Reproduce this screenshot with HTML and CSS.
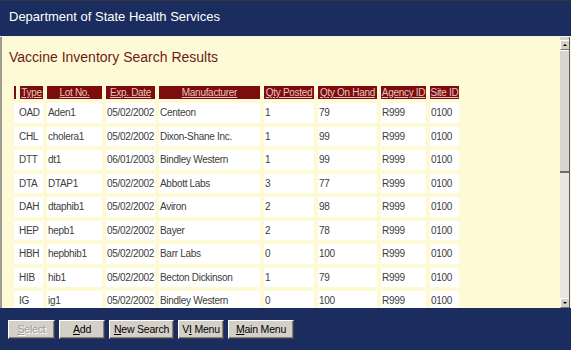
FILE: index.html
```html
<!DOCTYPE html>
<html lang="en">

<head>
    <meta charset="UTF-8">
    <title>Vaccine Inventory Search Results</title>
    <link rel="stylesheet" href="styles.css">
</head>

<body>
    <div class="topbar">Department of State Health Services</div>

    <div class="main">
        <div class="content">
            <h1>Vaccine Inventory Search Results</h1>
            <table class="results">
                <thead>
                    <tr>
                        <th class="c-mark"></th>
                        <th class="c-type"><a href="#">Type</a></th>
                        <th class="c-lot"><a href="#">Lot No.</a></th>
                        <th class="c-date"><a href="#">Exp. Date</a></th>
                        <th class="c-man"><a href="#">Manufacturer</a></th>
                        <th class="c-qp"><a href="#">Qty Posted</a></th>
                        <th class="c-qh"><a href="#">Qty On Hand</a></th>
                        <th class="c-ag"><a href="#">Agency ID</a></th>
                        <th class="c-site"><a href="#">Site ID</a></th>
                    </tr>
                </thead>
                <tbody>
                    <tr><td colspan="2" class="type">OAD</td><td>Aden1</td><td>05/02/2002</td><td>Centeon</td><td>1</td><td>79</td><td>R999</td><td>0100</td></tr>
                    <tr><td colspan="2" class="type">CHL</td><td>cholera1</td><td>05/02/2002</td><td>Dixon-Shane Inc.</td><td>1</td><td>99</td><td>R999</td><td>0100</td></tr>
                    <tr><td colspan="2" class="type">DTT</td><td>dt1</td><td>06/01/2003</td><td>Bindley Western</td><td>1</td><td>99</td><td>R999</td><td>0100</td></tr>
                    <tr><td colspan="2" class="type">DTA</td><td>DTAP1</td><td>05/02/2002</td><td>Abbott Labs</td><td>3</td><td>77</td><td>R999</td><td>0100</td></tr>
                    <tr><td colspan="2" class="type">DAH</td><td>dtaphib1</td><td>05/02/2002</td><td>Aviron</td><td>2</td><td>98</td><td>R999</td><td>0100</td></tr>
                    <tr><td colspan="2" class="type">HEP</td><td>hepb1</td><td>05/02/2002</td><td>Bayer</td><td>2</td><td>78</td><td>R999</td><td>0100</td></tr>
                    <tr><td colspan="2" class="type">HBH</td><td>hepbhib1</td><td>05/02/2002</td><td>Barr Labs</td><td>0</td><td>100</td><td>R999</td><td>0100</td></tr>
                    <tr><td colspan="2" class="type">HIB</td><td>hib1</td><td>05/02/2002</td><td>Becton Dickinson</td><td>1</td><td>79</td><td>R999</td><td>0100</td></tr>
                    <tr><td colspan="2" class="type">IG</td><td>ig1</td><td>05/02/2002</td><td>Bindley Western</td><td>0</td><td>100</td><td>R999</td><td>0100</td></tr>
                </tbody>
            </table>
        </div>
        <div class="scrollbar">
            <div class="sb-btn"><span class="arrow-up"></span></div>
            <div class="sb-thumb"></div>
            <div class="sb-track"></div>
            <div class="sb-btn"><span class="arrow-down"></span></div>
        </div>
    </div>

    <div class="bottombar">
        <button class="btn disabled" style="width: 47px"><u>S</u>elect</button>
        <button class="btn" style="width: 46px"><u>A</u>dd</button>
        <button class="btn" style="width: 65px"><u>N</u>ew Search</button>
        <button class="btn" style="width: 46px">V<u>I</u> Menu</button>
        <button class="btn" style="width: 66px"><u>M</u>ain Menu</button>
    </div>
</body>

</html>
```

FILE: styles.css
```css
html,
body {
    margin: 0;
    height: 350px;
    overflow: hidden;
}

body {
    display: flex;
    flex-direction: column;
    background: #1b2d5e;
    font-family: "Liberation Sans", Arial, sans-serif;
}

.topbar {
    height: 36px;
    box-sizing: border-box;
    padding: 8px 0 0 9px;
    font-size: 13px;
    line-height: 16px;
    color: #ffffff;
    background: #1b2d5e;
    border-top: 1px solid #33363f;
}

.main {
    height: 271px;
    display: flex;
    border-top: 1px solid #f4f2ea;
    background: #fffad6;
}

.content {
    flex: 1;
    overflow: hidden;
    border-left: 2px solid #9c9a92;
}

.content h1 {
    margin: 12px 0 0 7px;
    font-size: 14px;
    line-height: 16px;
    font-weight: normal;
    color: #6e1a16;
}

.results {
    margin: 17px 0 0 8px;
    table-layout: fixed;
    width: 453px;
    border-spacing: 4px;
    font-size: 10px;
    letter-spacing: -0.3px;
}

.results th {
    height: 13px;
    padding: 0;
    background: #7d0c0c;
    font-weight: normal;
    white-space: nowrap;
    overflow: hidden;
}

.results th a {
    color: #e6c4c0;
}

.results td {
    height: 19.5px;
    padding: 0 0 0 1px;
    background: #ffffff;
    color: #3c3c3c;
    white-space: nowrap;
}

.results td.type {
    padding-left: 5px;
}

.c-mark { width: 2px; }
.c-type { width: 23px; }
.c-lot { width: 55px; }
.c-date { width: 49px; }
.c-man { width: 101px; }
.c-qp { width: 50px; }
.c-qh { width: 59px; }
.c-ag { width: 45px; }
.c-site { width: 29px; }

.scrollbar {
    width: 9px;
    display: flex;
    flex-direction: column;
    padding-top: 3px;
    margin-right: 1px;
    background: #d6d3cb;
    border-right: 1px solid #5a5a5a;
}

.sb-btn {
    height: 8px;
    display: flex;
    align-items: center;
    justify-content: center;
    background: #d4d0c8;
    border-top: 1px solid #ffffff;
    border-left: 1px solid #ffffff;
    border-bottom: 1px solid #707070;
}

.arrow-up,
.arrow-down {
    width: 0;
    height: 0;
    border-left: 2px solid transparent;
    border-right: 2px solid transparent;
}

.arrow-up {
    border-bottom: 2px solid #000000;
}

.arrow-down {
    border-top: 2px solid #000000;
}

.sb-thumb {
    height: 120px;
    background: #d8d5ce;
    border-top: 1px solid #ffffff;
    border-bottom: 2px solid #6a6a6a;
}

.sb-track {
    flex: 1;
    background: #e8e6e0;
}

.bottombar {
    flex: 1;
    display: flex;
    align-items: flex-start;
    gap: 4px;
    padding: 12px 0 0 8px;
    background: #1b2d5e;
}

.btn {
    height: 19px;
    padding: 0;
    white-space: nowrap;
    font-family: "Liberation Sans", Arial, sans-serif;
    font-size: 10.5px;
    line-height: 15px;
    letter-spacing: -0.2px;
    color: #000000;
    background: #d4d0c8;
    border: 1px solid;
    border-color: #ffffff #404040 #404040 #ffffff;
    box-shadow: inset -1px -1px 0 #808080;
}

.btn.disabled {
    color: #a09c94;
    text-shadow: 1px 1px 0 #ffffff;
}
```
